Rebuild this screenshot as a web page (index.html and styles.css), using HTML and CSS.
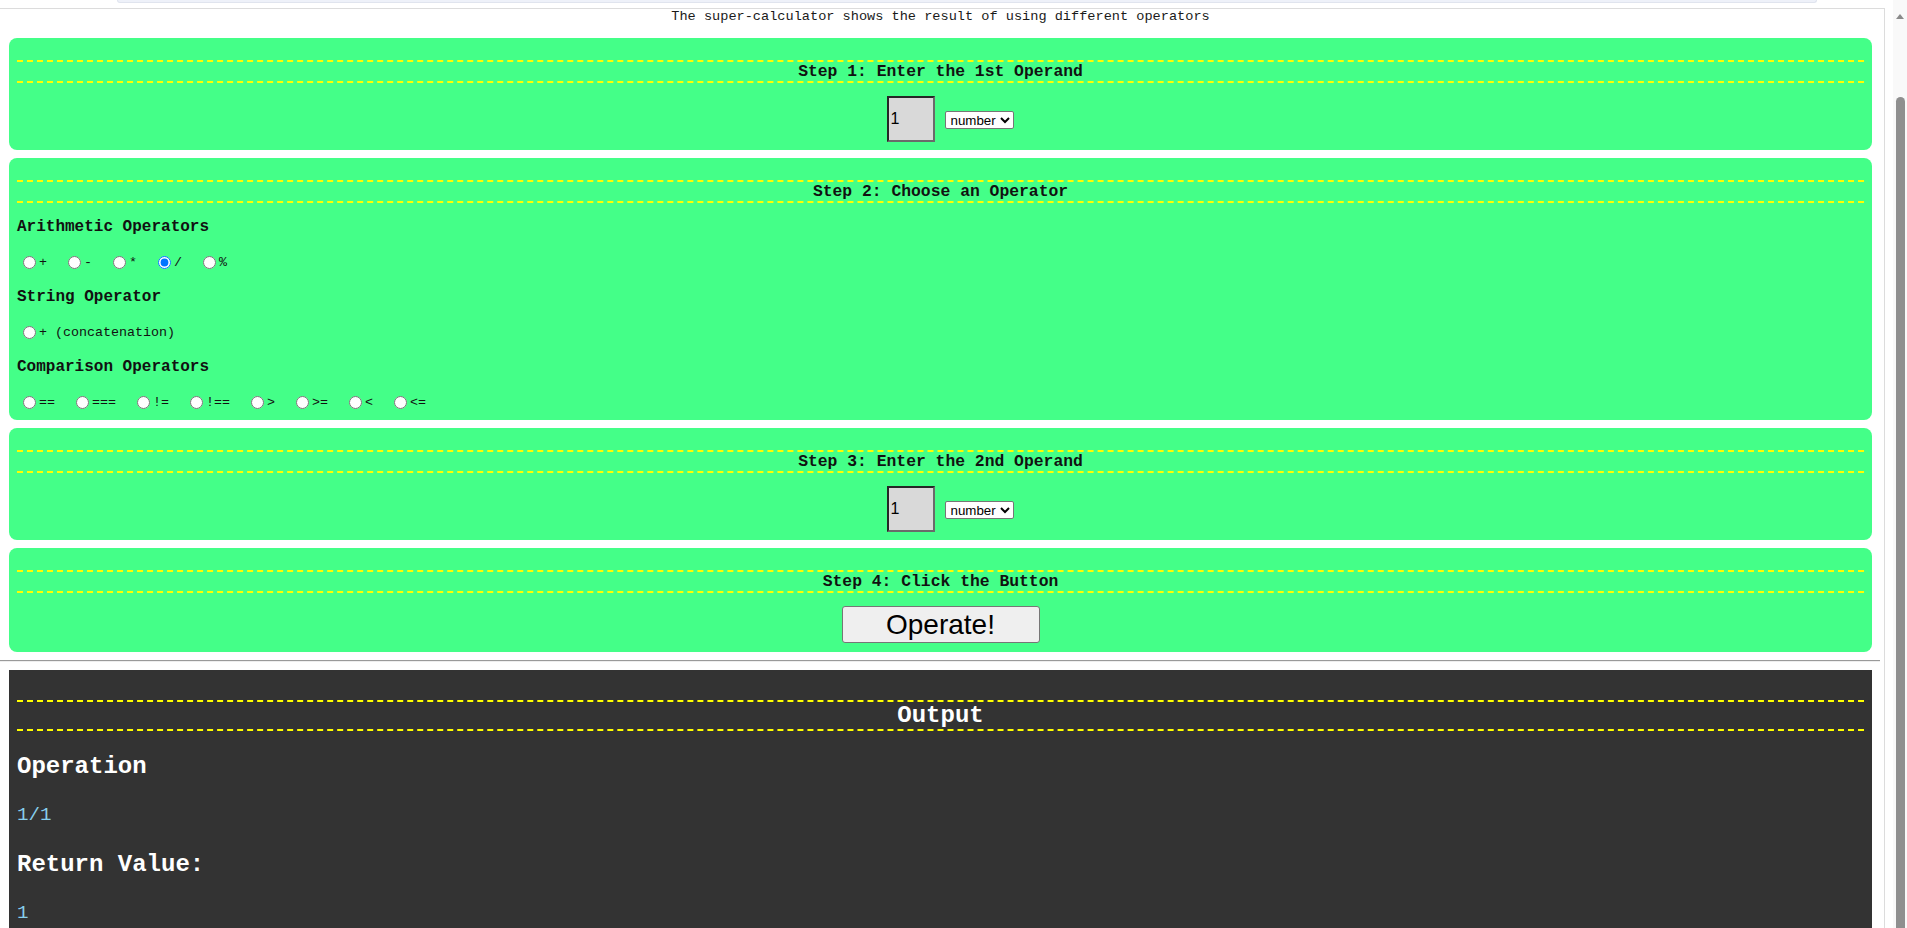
FILE: index.html
```html
<!DOCTYPE html>
<html lang="en">
<head>
<meta charset="utf-8">
<title>Super Calculator</title>
<link rel="stylesheet" href="styles.css">
</head>
<body>
<div class="page">
  <div class="topbar"><div class="pill"></div></div>
  <div class="frame">
    <p class="subtitle">The super-calculator shows the result of using different operators</p>

    <section class="card card-operand">
      <h3 class="step">Step 1: Enter the 1st Operand</h3>
      <div class="operand-row">
        <input class="operand" type="text" value="1">
        <select class="type-select"><option>number</option><option>string</option></select>
      </div>
    </section>

    <section class="card card-ops">
      <h3 class="step">Step 2: Choose an Operator</h3>
      <div class="ops">
        <div class="group-label">Arithmetic Operators</div>
        <div class="opt-row">
          <label class="opt"><input type="radio" name="op"><span>+</span></label>
          <label class="opt"><input type="radio" name="op"><span>-</span></label>
          <label class="opt"><input type="radio" name="op"><span>*</span></label>
          <label class="opt"><input type="radio" name="op" checked><span>/</span></label>
          <label class="opt"><input type="radio" name="op"><span>%</span></label>
        </div>
        <div class="group-label">String Operator</div>
        <div class="opt-row">
          <label class="opt"><input type="radio" name="op"><span>+ (concatenation)</span></label>
        </div>
        <div class="group-label">Comparison Operators</div>
        <div class="opt-row">
          <label class="opt"><input type="radio" name="op"><span>==</span></label>
          <label class="opt"><input type="radio" name="op"><span>===</span></label>
          <label class="opt"><input type="radio" name="op"><span>!=</span></label>
          <label class="opt"><input type="radio" name="op"><span>!==</span></label>
          <label class="opt"><input type="radio" name="op"><span>&gt;</span></label>
          <label class="opt"><input type="radio" name="op"><span>&gt;=</span></label>
          <label class="opt"><input type="radio" name="op"><span>&lt;</span></label>
          <label class="opt"><input type="radio" name="op"><span>&lt;=</span></label>
        </div>
      </div>
    </section>

    <section class="card card-operand">
      <h3 class="step">Step 3: Enter the 2nd Operand</h3>
      <div class="operand-row">
        <input class="operand" type="text" value="1">
        <select class="type-select"><option>number</option><option>string</option></select>
      </div>
    </section>

    <section class="card card-button">
      <h3 class="step">Step 4: Click the Button</h3>
      <div class="button-row">
        <button class="operate" type="button">Operate!</button>
      </div>
    </section>

    <hr class="divider">

    <section class="output">
      <h2 class="out-title">Output</h2>
      <div class="out-body">
        <div class="out-head">Operation</div>
        <div class="out-value">1/1</div>
        <div class="out-head">Return Value:</div>
        <div class="out-value">1</div>
      </div>
    </section>
  </div>
</div>
<div class="scrollbar">
  <div class="sb-arrow"></div>
  <div class="sb-thumb"></div>
</div>
</body>
</html>
```
FILE: styles.css
```css
html, body {
  margin: 0;
  padding: 0;
  height: 928px;
  overflow: hidden;
  background: #ffffff;
}

body {
  display: flex;
  font-family: "Liberation Mono", "Courier New", monospace;
  color: #000;
}

.page {
  width: 1893px;
  flex: none;
  display: flex;
  flex-direction: column;
}

.topbar {
  height: 8px;
  padding-left: 117px;
  box-sizing: border-box;
}

.pill {
  width: 1698px;
  height: 2px;
  background: #eef1f9;
  border: 1px solid #e0e4ee;
  border-top: none;
  border-radius: 0 0 10px 10px;
}

.frame {
  width: 1885px;
  flex: 1;
  box-sizing: border-box;
  border-top: 1px solid #dcdcdc;
  border-right: 1px solid #dcdcdc;
  overflow: hidden;
}

.subtitle {
  margin: 0 0 14px 0;
  padding-right: 3px;
  font-size: 13.6px;
  line-height: 15px;
  text-align: center;
  color: #1a1a1a;
}

.card {
  margin: 0 12px 8px 9px;
  background: #44ff88;
  border-radius: 8px;
  padding: 22px 8px 8px 8px;
}

.step {
  margin: 0;
  border-top: 2px dashed #ffff00;
  border-bottom: 2px dashed #ffff00;
  font-size: 16.38px;
  line-height: 19px;
  font-weight: bold;
  text-align: center;
  color: #111;
}

.operand-row {
  display: flex;
  justify-content: center;
  align-items: center;
  gap: 10px;
  padding-left: 19px;
  margin-top: 13px;
}

.operand {
  box-sizing: border-box;
  width: 48px;
  height: 46px;
  margin: 0;
  padding: 1px 2px;
  background: #d9d9d9;
  border-style: solid;
  border-width: 2px;
  border-color: #262626 #6a6a6a #6a6a6a #262626;
  font-family: "Liberation Sans", Arial, sans-serif;
  font-size: 16px;
  color: #000;
}

.type-select {
  box-sizing: border-box;
  height: 18px;
  margin: 1px 0 0 0;
  padding: 0 0 0 1px;
  font-family: "Liberation Sans", Arial, sans-serif;
  font-size: 13.33px;
  background: #fff;
  border: 1px solid #767676;
  border-radius: 2px;
  color: #000;
}

.card-ops {
  padding-bottom: 0;
}

.ops {
  padding-top: 7px;
}

.group-label {
  height: 35px;
  line-height: 35px;
  font-size: 16px;
  font-weight: bold;
  color: #111;
}

.opt-row {
  height: 35px;
  display: flex;
  align-items: center;
  padding-left: 1px;
}

.opt {
  display: flex;
  align-items: center;
  margin-right: 16px;
  font-size: 13.33px;
  color: #111;
}

.opt input {
  width: 13px;
  height: 13px;
  margin: 0 3px 0 5px;
}

.card-button {
  padding-bottom: 9px;
}

.button-row {
  display: flex;
  justify-content: center;
  margin-top: 13px;
}

.operate {
  box-sizing: border-box;
  width: 198px;
  height: 37px;
  padding: 0;
  background: #efefef;
  border: 1px solid #767676;
  border-radius: 3px;
  font-family: "Liberation Sans", Arial, sans-serif;
  font-size: 28px;
  line-height: 35px;
  color: #000;
}

.divider {
  margin: 0 4px 8px 0;
  height: 0;
  border: none;
  border-top: 1px solid #9a9a9a;
  border-bottom: 1px solid #eeeeee;
}

.output {
  margin: 0 12px 0 9px;
  background: #333333;
  padding: 30px 8px 40px 8px;
  color: #fff;
}

.out-title {
  margin: 0;
  border-top: 2px dashed #ffff00;
  border-bottom: 2px dashed #ffff00;
  font-size: 24px;
  line-height: 27px;
  font-weight: bold;
  text-align: center;
  color: #fff;
}

.out-body {
  padding-top: 11px;
}

.out-head {
  height: 49px;
  line-height: 49px;
  font-size: 24px;
  font-weight: bold;
  color: #fff;
}

.out-value {
  height: 49px;
  line-height: 49px;
  font-size: 19.2px;
  color: #87ceeb;
}

.scrollbar {
  width: 14px;
  flex: none;
  background: #f9f9f9;
  display: flex;
  flex-direction: column;
}

.sb-arrow {
  width: 0;
  height: 0;
  margin: 14px 0 0 3px;
  border-left: 4px solid transparent;
  border-right: 4px solid transparent;
  border-bottom: 5px solid #8a8a8a;
}

.sb-thumb {
  width: 9px;
  margin: 78px 0 0 3px;
  flex: 1;
  background: #8f8f8f;
  border-radius: 5px 5px 0 0;
}
```
